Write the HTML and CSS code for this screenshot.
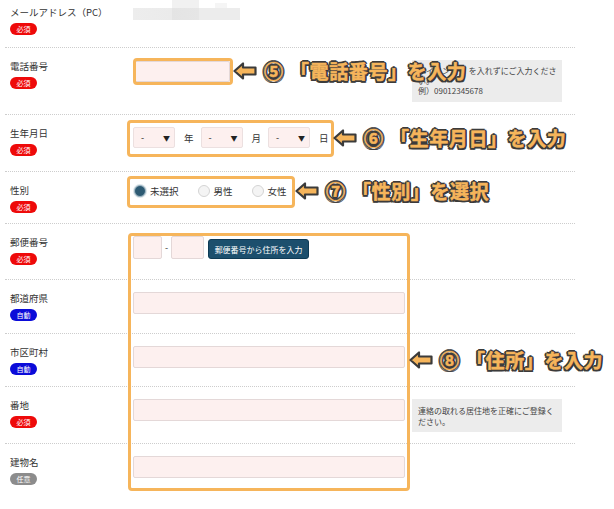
FILE: index.html
```html
<!DOCTYPE html>
<html lang="ja">
<head>
  <meta charset="UTF-8">
  <meta name="viewport" content="width=device-width, initial-scale=1.0">
  <title>会員情報入力</title>
  <link rel="stylesheet" href="styles.css">
</head>
<body>
  <div class="page">
    <div class="form">

      <!-- Email (already filled) -->
      <div class="row row-mail">
        <div class="head">
          <p class="name">メールアドレス（PC）</p>
          <span class="badge req">必須</span>
        </div>
        <div class="field">
          <div class="blur"></div>
        </div>
      </div>

      <!-- Phone -->
      <div class="row row-tel">
        <div class="head">
          <p class="name">電話番号</p>
          <span class="badge req">必須</span>
        </div>
        <div class="field">
          <div class="main">
            <input type="text" class="input input-tel">
          </div>
          <div class="hint hint-tel">ハイフン（-）を入れずにご入力ください。<br>例）09012345678</div>
        </div>
      </div>

      <!-- Birthday -->
      <div class="row row-birth">
        <div class="head">
          <p class="name">生年月日</p>
          <span class="badge req">必須</span>
        </div>
        <div class="field">
          <div class="main date">
            <div class="select"><span>-</span><span class="caret">▼</span></div>
            <span class="unit">年</span>
            <div class="select"><span>-</span><span class="caret">▼</span></div>
            <span class="unit">月</span>
            <div class="select"><span>-</span><span class="caret">▼</span></div>
            <span class="unit">日</span>
          </div>
        </div>
      </div>

      <!-- Sex -->
      <div class="row row-sex">
        <div class="head">
          <p class="name">性別</p>
          <span class="badge req">必須</span>
        </div>
        <div class="field">
          <div class="main radios">
            <label class="opt"><span class="radio on"></span>未選択</label>
            <label class="opt"><span class="radio"></span>男性</label>
            <label class="opt"><span class="radio"></span>女性</label>
          </div>
        </div>
      </div>

      <!-- Postal code -->
      <div class="row row-zip">
        <div class="head">
          <p class="name">郵便番号</p>
          <span class="badge req">必須</span>
        </div>
        <div class="field">
          <div class="main zip">
            <input type="text" class="input input-zip1">
            <span class="dash">-</span>
            <input type="text" class="input input-zip2">
            <button class="zip-btn">郵便番号から住所を入力</button>
          </div>
        </div>
      </div>

      <!-- Prefecture -->
      <div class="row row-pref">
        <div class="head">
          <p class="name">都道府県</p>
          <span class="badge auto">自動</span>
        </div>
        <div class="field">
          <div class="main"><input type="text" class="input input-wide"></div>
        </div>
      </div>

      <!-- City -->
      <div class="row row-city">
        <div class="head">
          <p class="name">市区町村</p>
          <span class="badge auto">自動</span>
        </div>
        <div class="field">
          <div class="main"><input type="text" class="input input-wide"></div>
        </div>
      </div>

      <!-- Street -->
      <div class="row row-addr">
        <div class="head">
          <p class="name">番地</p>
          <span class="badge req">必須</span>
        </div>
        <div class="field">
          <div class="main"><input type="text" class="input input-wide"></div>
          <div class="hint">連絡の取れる居住地を正確にご登録ください。</div>
        </div>
      </div>

      <!-- Building -->
      <div class="row row-bldg">
        <div class="head">
          <p class="name">建物名</p>
          <span class="badge opt-badge">任意</span>
        </div>
        <div class="field">
          <div class="main"><input type="text" class="input input-wide"></div>
        </div>
      </div>
    </div>

    <!-- Annotations drawn over the form -->
    <div class="mark mark-tel"></div>
    <div class="mark mark-birth"></div>
    <div class="mark mark-sex"></div>
    <div class="mark mark-addr"></div>

    <div class="callout callout-tel">
      <svg class="arrow" width="24" height="18" viewBox="0 0 24 18"><path d="M1.5 9 L10 1.5 L10 5.5 L22.5 5.5 L22.5 12.5 L10 12.5 L10 16.5 Z"/></svg>
      <span class="num">⑤</span><span class="words">「電話番号」を入力</span>
    </div>
    <div class="callout callout-birth">
      <svg class="arrow" width="24" height="18" viewBox="0 0 24 18"><path d="M1.5 9 L10 1.5 L10 5.5 L22.5 5.5 L22.5 12.5 L10 12.5 L10 16.5 Z"/></svg>
      <span class="num">⑥</span><span class="words">「生年月日」を入力</span>
    </div>
    <div class="callout callout-sex">
      <svg class="arrow" width="24" height="18" viewBox="0 0 24 18"><path d="M1.5 9 L10 1.5 L10 5.5 L22.5 5.5 L22.5 12.5 L10 12.5 L10 16.5 Z"/></svg>
      <span class="num">⑦</span><span class="words">「性別」を選択</span>
    </div>
    <div class="callout callout-addr">
      <svg class="arrow" width="24" height="18" viewBox="0 0 24 18"><path d="M1.5 9 L10 1.5 L10 5.5 L22.5 5.5 L22.5 12.5 L10 12.5 L10 16.5 Z"/></svg>
      <span class="num">⑧</span><span class="words">「住所」を入力</span>
    </div>
  </div>
</body>
</html>
```

FILE: styles.css
```css
* {
  box-sizing: border-box;
}

body {
  margin: 0;
  background: #fff;
  color: #333;
  font-family: "Noto Sans CJK JP", "Noto Sans", sans-serif;
}

.page {
  position: relative;
  width: 614px;
  height: 509px;
  overflow: hidden;
}

.form {
  margin-left: 5px;
  width: 570px;
}

/* One form row: label column + field column */
.row {
  display: flex;
  padding-top: 12px;
  border-bottom: 1px dotted #cdcdcd;
}

.row-mail { height: 48px; padding-top: 6px; }
.row-tel { height: 67px; }
.row-birth { height: 57px; }
.row-sex { height: 52px; }
.row-zip { height: 56px; }
.row-pref { height: 54px; }
.row-city { height: 53px; }
.row-addr { height: 57px; }
.row-bldg { border-bottom: none; }

.head {
  width: 128px;
  padding-left: 5px;
}

.name {
  margin: 0;
  font-size: 9.5px;
  line-height: 12px;
  color: #333;
}

.badge {
  display: block;
  margin-top: 5px;
  width: 27px;
  height: 12px;
  border-radius: 6px;
  font-size: 7px;
  line-height: 12px;
  text-align: center;
  color: #fff;
}

.badge.req { background: #ee0a0a; }
.badge.auto { background: #0b0bd9; }
.badge.opt-badge { background: #8c8c8c; }

.field {
  display: flex;
  align-items: flex-start;
}

.main {
  width: 272px;
}

.hint {
  width: 150px;
  margin-left: 7px;
  padding: 6px 4px 5px 6px;
  background: #ececec;
  font-size: 8px;
  line-height: 11px;
  color: #444;
}

.hint-tel {
  height: 42px;
  line-height: 10px;
}

/* blurred email value */
.blur {
  position: relative;
  margin-top: 2px;
  width: 107px;
  height: 12px;
  background: linear-gradient(90deg, #ededed 0, #ebebeb 36%, #e4e4e4 36%, #e6e6e6 62%, #ececec 62%);
}

.blur::before {
  content: "";
  position: absolute;
  left: 39px;
  top: -8px;
  width: 27px;
  height: 8px;
  background: #f1f1f1;
}

.blur::after {
  content: "";
  position: absolute;
  left: 82px;
  top: -5px;
  width: 12px;
  height: 5px;
  background: #f5f5f5;
}

.input {
  display: block;
  height: 22px;
  padding: 0;
  border: 1px solid #e4d8d8;
  border-radius: 2px;
  background: #fdf0ef;
}

.input-tel {
  width: 96px;
  height: 21px;
  margin: 1px 0 0 1px;
}

.input-wide {
  width: 272px;
}

/* birthday selects */
.date {
  display: flex;
  align-items: center;
}

.select {
  display: flex;
  justify-content: space-between;
  align-items: center;
  width: 42px;
  height: 21px;
  padding: 0 4px 0 7px;
  border: 1px solid #ece0e0;
  border-radius: 2px;
  background: #fdf0ef;
  font-size: 9px;
  color: #222;
}

.caret {
  font-size: 7px;
}

.unit {
  margin: 0 7px 0 9px;
  font-size: 9.5px;
}

/* sex radios */
.radios {
  display: flex;
  align-items: center;
  margin-top: 1px;
  padding-left: 1px;
}

.opt {
  display: flex;
  align-items: center;
  gap: 4px;
  margin-right: 19px;
  font-size: 9.5px;
  line-height: 12px;
}

.radio {
  width: 12px;
  height: 12px;
  border-radius: 50%;
  border: 1px solid #d4d4d4;
  background: #f4f4f4;
}

.radio.on {
  border: 1px solid #9fb6c3;
  background: #2d5a73;
  box-shadow: 0 0 0 1px #dbe5ea;
}

/* postal code */
.zip {
  display: flex;
  align-items: flex-start;
}

.input-zip1 {
  width: 29px;
  height: 23px;
}

.input-zip2 {
  width: 33px;
  height: 23px;
}

.dash {
  margin: 0 3px;
  font-size: 9px;
  line-height: 23px;
}

.zip-btn {
  margin: 3px 0 0 4px;
  width: 101px;
  height: 20px;
  padding: 0;
  border: 1px solid #0e3a54;
  border-radius: 3px;
  background: #1c4f6d;
  color: #fff;
  font-family: inherit;
  font-size: 8px;
}

/* orange highlight frames */
.mark {
  position: absolute;
  border: 3px solid #f6b55b;
  border-radius: 4px;
}

.mark-tel { left: 133px; top: 58px; width: 100px; height: 27px; }
.mark-birth { left: 127px; top: 120px; width: 207px; height: 37px; }
.mark-sex { left: 127px; top: 176px; width: 168px; height: 32px; }
.mark-addr { left: 128px; top: 233px; width: 282px; height: 258px; }

/* callout labels */
.callout {
  position: absolute;
  display: flex;
  align-items: center;
  gap: 7px;
  height: 24px;
}

.callout-tel { left: 233px; top: 59px; }
.callout-birth { left: 333px; top: 126px; }
.callout-sex { left: 295px; top: 179px; }
.callout-addr { left: 409px; top: 348px; }

.arrow path {
  fill: #f6b55b;
  stroke: #3b3b3b;
  stroke-width: 2.2;
  stroke-linejoin: round;
}

.num,
.words {
  font-size: 19px;
  font-weight: 700;
  line-height: 24px;
  letter-spacing: 0.6px;
  color: #f6b55b;
  -webkit-text-stroke: 0.5px #f6b55b;
  text-shadow:
    2px 0 0 #3b3b3b, -2px 0 0 #3b3b3b, 0 2px 0 #3b3b3b, 0 -2px 0 #3b3b3b,
    1.5px 1.5px 0 #3b3b3b, -1.5px 1.5px 0 #3b3b3b, 1.5px -1.5px 0 #3b3b3b, -1.5px -1.5px 0 #3b3b3b,
    0 0 2px #3b3b3b;
}

.num {
  letter-spacing: 0;
}
```
